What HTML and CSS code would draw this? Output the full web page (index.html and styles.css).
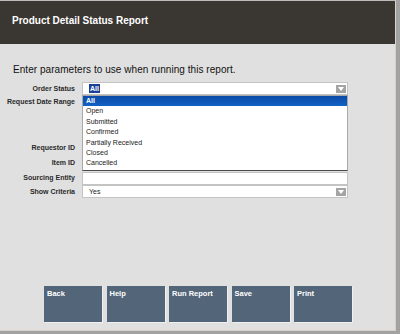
FILE: index.html
```html
<!DOCTYPE html>
<html>
<head>
<meta charset="utf-8">
<link rel="stylesheet" href="styles.css">
</head>
<body>
<div class="frame">
  <header class="header"><h1 class="title">Product Detail Status Report</h1></header>
  <main class="content">
    <p class="intro">Enter parameters to use when running this report.</p>
    <div class="form">
      <label class="lbl r-order">Order Status</label>
      <div class="field r-order">
        <div class="select"><span class="sel-text">All</span><span class="arrow"></span></div>
        <ul class="menu">
          <li class="active">All</li>
          <li>Open</li>
          <li>Submitted</li>
          <li>Confirmed</li>
          <li>Partially Received</li>
          <li>Closed</li>
          <li>Cancelled</li>
        </ul>
      </div>
      <label class="lbl top r-date">Request Date Range</label>
      <div class="field r-date"></div>
      <label class="lbl r-req">Requestor ID</label>
      <div class="field r-req"><div class="input"></div></div>
      <label class="lbl r-item">Item ID</label>
      <div class="field r-item"><div class="input"></div></div>
      <label class="lbl r-src">Sourcing Entity</label>
      <div class="field r-src"><div class="input"></div></div>
      <label class="lbl r-show">Show Criteria</label>
      <div class="field r-show"><div class="select"><span class="plain">Yes</span><span class="arrow"></span></div></div>
    </div>
    <nav class="buttons">
      <button class="btn">Back</button>
      <button class="btn">Help</button>
      <button class="btn">Run Report</button>
      <button class="btn">Save</button>
      <button class="btn">Print</button>
    </nav>
  </main>
</div>
</body>
</html>
```
FILE: styles.css
```css
html, body {
  margin: 0;
  padding: 0;
  background: #a2a2a2;
}
body {
  width: 400px;
  height: 334px;
  overflow: hidden;
  font-family: "Liberation Sans", Arial, sans-serif;
}
.frame {
  width: 396px;
  height: 331px;
  border-top: 1px solid #bcbcbc;
  border-right: 1px solid #d9d0c8;
  border-bottom: 1px solid #d9d0c8;
  background: #e0e0e0;
  display: flex;
  flex-direction: column;
  box-sizing: border-box;
}
.header {
  height: 43px;
  flex: none;
  background: #3a3632;
  display: flex;
  align-items: flex-start;
}
.title {
  margin: 0;
  padding: 13px 0 0 12px;
  color: #ffffff;
  font-size: 10px;
  font-weight: bold;
  line-height: 13px;
}
.content {
  flex: 1;
  display: flex;
  flex-direction: column;
}
.intro {
  margin: 19px 0 0 13px;
  font-size: 10px;
  line-height: 14px;
  color: #111;
  letter-spacing: 0.05px;
}
.form {
  margin-top: 5px;
  display: grid;
  grid-template-columns: 75px 266px;
  column-gap: 7px;
  grid-template-rows: 13px 44px 13px 14px 13px 13px;
  row-gap: 1px;
  align-content: start;
}
.form .r-src { margin-top: 2px; }
.form .r-show { margin-top: 1px; }
.lbl {
  font-size: 7px;
  font-weight: bold;
  color: #2a2a2a;
  text-align: right;
  align-self: center;
  white-space: nowrap;
  line-height: 9px;
}
.lbl.top { align-self: start; padding-top: 1px; }
.field {
  position: relative;
}
.select, .input {
  height: 13px;
  box-sizing: border-box;
  background: #fff;
  border: 1px solid #c4c4c4;
  display: flex;
  align-items: center;
  position: relative;
}
.sel-text {
  margin-left: 6px;
  background: #1b3f96;
  color: #fff;
  font-size: 7px;
  font-weight: bold;
  line-height: 9px;
  padding: 0 1px;
}
.plain {
  margin-left: 6px;
  font-size: 7px;
  color: #222;
}
.arrow {
  position: absolute;
  right: 1px;
  top: 2px;
  width: 10px;
  height: 8px;
  background: #a4a4a4;
}
.arrow::after {
  content: "";
  position: absolute;
  left: 2px;
  top: 2px;
  border-left: 3px solid transparent;
  border-right: 3px solid transparent;
  border-top: 4px solid #fff;
}
.menu {
  position: absolute;
  left: 0;
  top: 13px;
  width: 266px;
  box-sizing: border-box;
  margin: 0;
  padding: 0 0 1px 0;
  list-style: none;
  background: #fff;
  border: 1px solid #a8a8a8;
  border-bottom: 1px solid #4a4a4a;
  z-index: 5;
}
.menu li {
  height: 10.4px;
  line-height: 10.4px;
  font-size: 7px;
  color: #222;
  padding-left: 3px;
}
.menu li.active {
  background: linear-gradient(#0a4aa6, #1262c6);
  color: #fff;
  font-weight: bold;
}
.buttons {
  margin: auto 0 0 44px;
  padding-bottom: 8px;
  display: flex;
  gap: 4.5px;
}
.btn {
  width: 58px;
  height: 36px;
  border: none;
  margin: 0;
  padding: 3px 0 0 3px;
  background: #536579;
  color: #fff;
  font-family: "Liberation Sans", Arial, sans-serif;
  font-size: 7.5px;
  font-weight: bold;
  text-align: left;
  vertical-align: top;
  display: flex;
  align-items: flex-start;
  box-shadow: 1px 1px 0 #f0f0f0;
}
```
